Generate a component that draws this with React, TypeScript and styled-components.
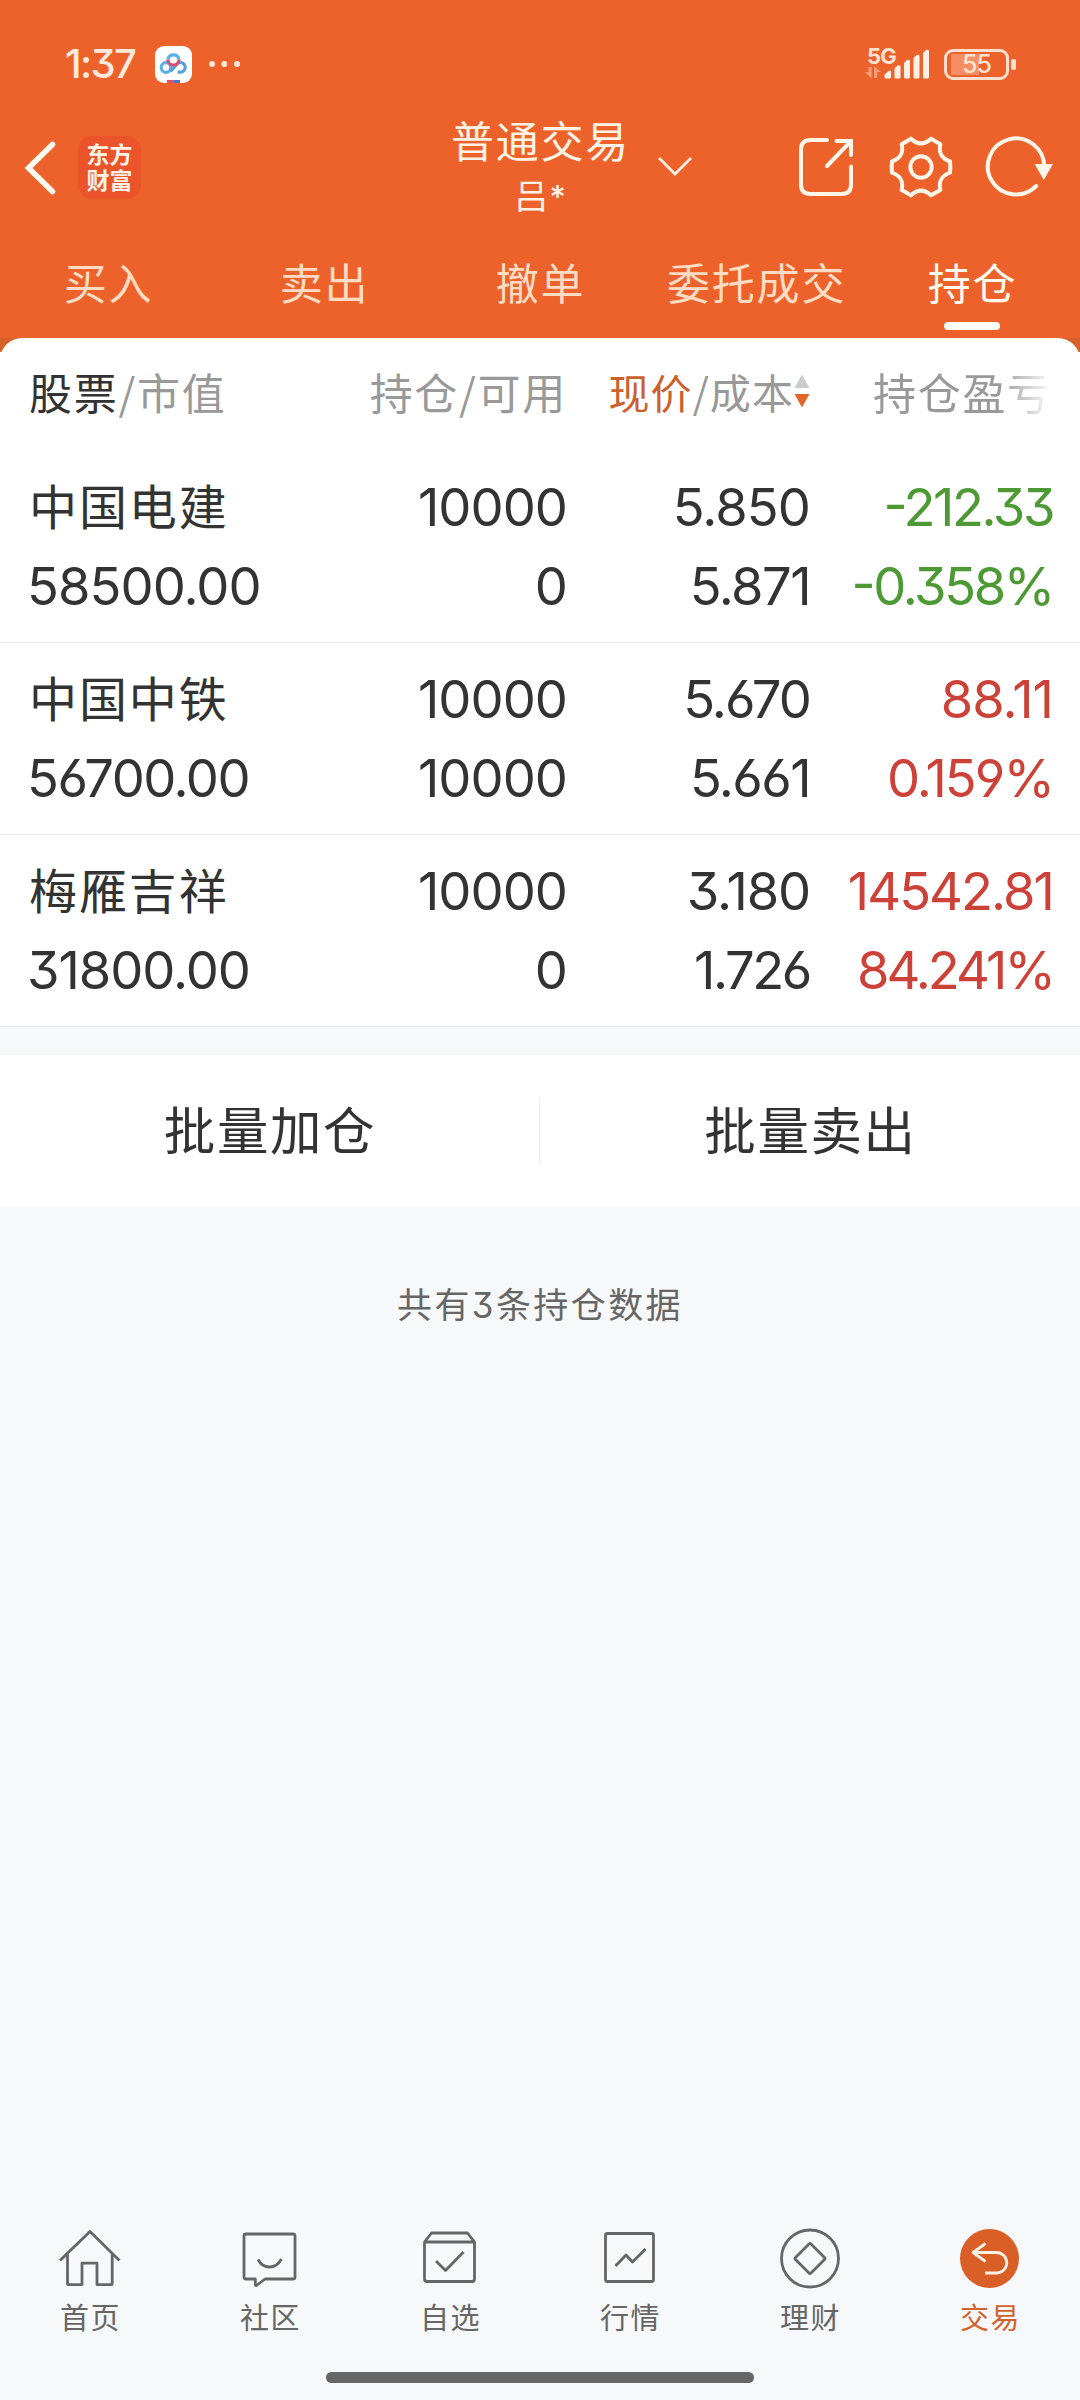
import React from "react";
import styled, { createGlobalStyle } from "styled-components";

const cjk = '"Noto Sans CJK SC", sans-serif';
const figures = 'Inter, "Noto Sans CJK SC", sans-serif';

const Global = createGlobalStyle`
  *, *::before, *::after { box-sizing: border-box; }
  body { margin: 0; background: #f7f8fa; font-family: ${cjk}; color: #333; }
  svg { display: block; flex: none; }
`;

const Screen = styled.div`
  width: 1080px;
  height: 2400px;
  display: flex;
  flex-direction: column;
  overflow: hidden;
  background: #f7f8fa;
`;

/* ---------- header ---------- */

const Header = styled.header`
  height: 338px;
  flex: none;
  background: #ed622b;
  display: flex;
  flex-direction: column;
`;

const StatusBar = styled.div`
  height: 108px;
  padding: 20px 64px 0 65px;
  display: flex;
  align-items: center;
  justify-content: space-between;
`;

const StatusSide = styled.div`
  display: flex;
  align-items: center;
`;

const Clock = styled.span`
  width: 90px;
  font: 500 40px/48px ${figures};
  font-feature-settings: "cv09";
  letter-spacing: -1.6px;
  color: #ffe9dc;
`;

const Network = styled.div`
  width: 34px;
  height: 36px;
  display: flex;
  flex-direction: column;
  margin-right: -15px;
`;

const NetworkLabel = styled.span`
  font: 700 22px/20px ${figures};
  letter-spacing: -0.8px;
  padding-left: 2px;
  color: #ffe3d2;
`;

const Battery = styled.div`
  width: 65px;
  height: 31px;
  margin-left: 14px;
  border: 3px solid #ffdfcd;
  border-radius: 9px;
  padding: 2px 4px;
  display: flex;
  align-items: center;
  justify-content: center;
  background: linear-gradient(#f58e64, #f58e64) 4px 2px / 28px 21px no-repeat;
  font: 500 25px/25px ${figures};
  letter-spacing: -1px;
  color: #ffe3d2;
`;

const BatteryCap = styled.span`
  width: 5px;
  height: 11px;
  margin-left: 2px;
  border-radius: 2px;
  background: #ffdfcd;
`;

const AppIcons = styled.div`
  display: flex;
  align-items: center;
  gap: 16px;
`;

const TitleBar = styled.div`
  height: 120px;
  display: grid;
  grid-template-columns: 422px 235px 139px 1fr;
`;

const NavLeft = styled.div`
  display: flex;
  align-items: center;
  padding: 0 0 1px 22px;
  gap: 21px;
`;

const BrandLogo = styled.div`
  width: 63px;
  height: 63px;
  border-radius: 14px;
  background: #eb542a;
  color: #fff3e8;
  padding: 4px 8px 0 8.5px;
  font: 700 23px/26px ${cjk};
  word-break: break-all;
`;

const TitleText = styled.div`
  display: flex;
  flex-direction: column;
  align-items: center;
  padding: 5px 0 0 2px;
  color: #fff3e6;
`;

const Title = styled.span`
  font: 400 43px/52px ${cjk};
  letter-spacing: 1.8px;
`;

const Account = styled.span`
  font: 400 34px/52px ${cjk};
  letter-spacing: 1px;
  padding-top: 4px;
`;

const Mask = styled.span`
  font: 500 32px/40px ${figures};
`;

const ChevronSlot = styled.div`
  display: flex;
  align-items: center;
  padding-bottom: 4px;
`;

const NavRight = styled.div`
  display: flex;
  align-items: center;
  gap: 31.5px;
  padding-bottom: 2px;
`;

const Tabs = styled.nav`
  height: 110px;
  display: grid;
  grid-template-columns: repeat(5, 1fr);
`;

const Tab = styled.div<{ $active?: boolean }>`
  display: flex;
  flex-direction: column;
  align-items: center;
  padding-top: 21px;
  font: 400 43px/64px ${cjk};
  letter-spacing: 1.8px;
  text-indent: 1.2px;
  white-space: nowrap;
  color: ${(p) => (p.$active ? "#fffaf0" : "#fddcc3")};
  &::after {
    content: "";
    width: 56px;
    height: 8px;
    margin-top: 9px;
    border-radius: 4px;
    background: ${(p) => (p.$active ? "#fffdf8" : "transparent")};
  }
`;

/* ---------- holdings ---------- */

const CornerStrip = styled.div`
  height: 14px;
  flex: none;
  overflow: hidden;
  background: #d65f2b;
  &::before {
    content: "";
    display: block;
    height: 44px;
    border-radius: 22px;
    background: #fff;
  }
`;

const Holdings = styled.section`
  background: #fff;
  flex: none;
`;

const columns = "292px 246px 243px 243px";

const HeadRow = styled.div`
  height: 99px;
  display: grid;
  grid-template-columns: ${columns};
  padding: 7px 27px 0 29px;
  font: 400 43px/64px ${cjk};
  letter-spacing: 1.7px;
  color: #999;
  white-space: nowrap;
`;

const HeadCell = styled.div<{ $end?: boolean; $sorted?: boolean }>`
  display: flex;
  justify-content: ${(p) => (p.$end ? "flex-end" : "flex-start")};
  align-items: center;
  height: 64px;
  font-size: ${(p) => (p.$sorted ? 41 : 43)}px;
  letter-spacing: ${(p) => (p.$sorted ? 1.1 : 1.7)}px;
`;

const FadingCell = styled(HeadCell)`
  padding-left: 63px;
  mask-image: linear-gradient(90deg, #000 188px, transparent 243px);
`;

const Strong = styled.span`
  color: #333;
`;

const Sorted = styled.span`
  color: #cb612d;
`;

const Row = styled.div`
  height: 192px;
  padding: 17px 27px 16px 29px;
  display: grid;
  grid-template-columns: ${columns};
  grid-template-rows: 79px 79px;
  border-bottom: 1px solid #ebebec;
`;

const Name = styled.span`
  font: 400 48px/72px ${cjk};
  letter-spacing: 1.9px;
`;

const FigureText = styled.span<{ $tone?: string; $end?: boolean; $tracking: number }>`
  font: 380 52.5px/79px ${figures};
  font-feature-settings: "cv03", "cv04", "cv09", "case";
  letter-spacing: ${(p) => p.$tracking}px;
  text-align: ${(p) => (p.$end ? "right" : "left")};
  margin-left: ${(p) => (p.$end ? 0 : -2)}px;
  color: ${(p) => p.$tone ?? "#333"};
  white-space: nowrap;
`;

const Actions = styled.div`
  height: 152px;
  margin-top: 28px;
  flex: none;
  display: grid;
  grid-template-columns: 539px 1px 1fr;
  align-items: center;
  background: #fff;
`;

const Action = styled.button`
  border: 0;
  background: none;
  padding: 0 0 6px 1px;
  font: 400 51.5px/80px ${cjk};
  letter-spacing: 1.6px;
  color: #333;
`;

const Divider = styled.span`
  height: 68px;
  background: #ececee;
`;

const Summary = styled.p`
  margin: 72px 0 0;
  font: 400 35px/52px ${figures};
  font-feature-settings: "cv09";
  letter-spacing: 2.4px;
  text-align: center;
  color: #666;
`;

/* ---------- bottom navigation ---------- */

const BottomNav = styled.nav`
  margin-top: auto;
  height: 144px;
  flex: none;
  display: grid;
  grid-template-columns: repeat(6, 1fr);
`;

const NavItem = styled.div<{ $active?: boolean }>`
  display: flex;
  flex-direction: column;
  align-items: center;
  font: 400 29px/40px ${cjk};
  letter-spacing: 1.6px;
  color: ${(p) => (p.$active ? "#d1622f" : "#666")};
`;

const NavLabel = styled.span`
  margin: 6px 0 0 1px;
`;

const HomeBar = styled.div`
  width: 428px;
  height: 11px;
  margin: 0 auto 17px;
  flex: none;
  border-radius: 6px;
  background: #666;
`;

/* ---------- drawings ---------- */

const CloudApp = () => (
  <svg width="37" height="37" viewBox="0 0 37 37" fill="none">
    <rect width="37" height="37" rx="9" fill="#fff" />
    <circle cx="11" cy="21.500" r="4.800" stroke="#5bb0e6" strokeWidth="3.200" />
    <path d="M15.500 25.500l6-7a4.800 4.800 0 1 1 1.500 7" stroke="#559fe0" strokeWidth="3.200" />
    <path d="M13 13.500a5.600 5.600 0 0 1 11 0" stroke="#5cb2e6" strokeWidth="3.200" />
    <path d="M12.900 13.500a5.600 5.600 0 0 0 11.200 0" stroke="#d9506c" strokeWidth="3.200" />
    <path d="M12 34h7v3h-7z" fill="#dc5570" />
    <path d="M19 34h6v3h-6z" fill="#4a78c8" />
  </svg>
);

const Dots = () => (
  <svg width="34" height="8" viewBox="0 0 34 8" fill="#ffe6d8">
    <circle cx="4" cy="4" r="3" />
    <circle cx="16.300" cy="4" r="3" />
    <circle cx="29" cy="4" r="3" />
  </svg>
);

const DataArrows = () => (
  <svg width="16" height="13" viewBox="0 0 16 13" fill="#f79c78">
    <path d="M3.600 1h3v11.500L0 6h3.600zM9 0l7 6h-3.800v6H9z" />
  </svg>
);

const Signal = () => (
  <svg width="46" height="30" viewBox="0 0 46 30" fill="#fff0e6">
    <path d="M.5 25.500 4 22.500q3-2 3 0V28q0 1.500-1.500 1.500h-3.500q-1.500 0-1.500-1.500zM10.500 19.500l3-3q3-1 3 1V28q0 1.500-1.500 1.500h-3q-1.500 0-1.500-1.500zM20 14l3-3q3-1 3 1v16q0 1.500-1.500 1.500h-3Q20 29.500 20 28zM29.500 9l3-3q3-1 3 1v21q0 1.500-1.500 1.500h-3q-1.500 0-1.500-1.500zM39 4l3-3q3-1 3 1v26q0 1.500-1.500 1.500h-3Q39 29.500 39 28z" />
  </svg>
);

const Back = () => (
  <svg width="35" height="56" viewBox="0 0 35 56" fill="none" stroke="#fff8ee" strokeWidth="5.600" strokeLinecap="round">
    <path d="M30.500 4.500 6.500 28l24 23.500" />
  </svg>
);

const Share = () => (
  <svg width="60" height="62" viewBox="796 136 60 62" fill="none" stroke="#fff6ea" strokeWidth="4" strokeLinecap="round">
    <path d="M827 140H810.500Q801 140 801 149.500V184.500Q801 194 810.500 194H841.500Q851 194 851 184.500V166.500M827 166 850.500 141.500M836.500 141H851V155" />
  </svg>
);

const Gear = () => (
  <svg width="66" height="62" viewBox="383 348 198 186" fill="none" stroke="#fff6ea" strokeWidth="12" strokeLinejoin="round">
    <path d="M452 356Q482 384 512 356L540 373C534 400 544 415 569 424Q571 441 569 458C544 467 534 482 540 510L512 526Q482 498 452 526L424 510C430 482 420 467 395 458Q393 441 395 424C420 415 430 400 424 373Z" />
    <circle cx="482" cy="441" r="32" />
  </svg>
);

const Refresh = () => (
  <svg width="68" height="62" viewBox="984 136 68 62" fill="none" stroke="#fff6ea" strokeWidth="4" strokeLinecap="round">
    <path d="M1043.200 167A28.200 28 0 1 0 1035.200 186" />
    <path d="M1033.500 164h18.500l-9.200 16z" fill="#fff6ea" stroke="none" />
  </svg>
);

const Chevron = () => (
  <svg width="36" height="22" viewBox="0 0 36 22" fill="none" stroke="#fff0e2" strokeWidth="2.800">
    <path d="M2 3l16 16L34 3" />
  </svg>
);

const SortArrows = () => (
  <svg width="16" height="36" viewBox="0 0 16 36">
    <path d="M8 1.500l7.500 13.500H.5z" fill="#ccc" />
    <path d="M8 34.500L.5 21h15z" fill="#e3652c" />
  </svg>
);

const icons: Record<string, React.ReactNode> = {
  home: <path d="M60 2260.500 90 2231.500l29.500 29M67.500 2254.500v29.500q0 .7.700.7H82v-21.500h15v21.500h14.500q.7 0 .7-.7v-29.500" />,
  chat: (
    <g transform="translate(-180)">
      <path d="M246 2234h47q2 0 2 2v41q0 2-2 2h-28l-8.500 6.500q-1.200.5-1.200-1V2279H246q-2 0-2-2v-41q0-2 2-2z" />
      <path d="M258 2259.500q4 7.500 11.500 7.500t12-8" />
    </g>
  ),
  picks: (
    <g transform="translate(-360)">
      <path d="M424.500 2242l7-9h36l7 9v37q0 2.500-2.500 2.500h-45q-2.500 0-2.500-2.500zh50" />
      <path d="M436 2261l9.500 9.500 18-18.500" />
    </g>
  ),
  market: (
    <g transform="translate(-540)">
      <rect x="605.500" y="2233.500" width="48" height="48" rx="2" />
      <path d="M615.500 2266l10.500-11 6.500 7 13-13" />
    </g>
  ),
  wealth: (
    <g transform="translate(-720)">
      <circle cx="810" cy="2258.500" r="28.500" />
      <path d="M809 2244q1-1 2 0l13.500 13.500q1 1 0 2l-13.500 13.500q-1 1-2 0l-13.500-13.500q-1-1 0-2z" />
    </g>
  ),
  trade: (
    <g transform="translate(-900)">
      <circle cx="989.500" cy="2258.500" r="29.500" fill="#d95f27" stroke="none" />
      <path d="M985.500 2243.500 973 2252.500l12.500 9M973 2252.500h23.500a10 10 0 0 1 0 20.500H985" stroke="#fff0e4" />
    </g>
  ),
};

const TabIcon = ({ name }: { name: string }) => (
  <svg width="64" height="62" viewBox="58 2228 64 62" fill="none" stroke="#666" strokeWidth="2.800" strokeLinejoin="round">
    {icons[name]}
  </svg>
);

/* ---------- figures ---------- */

// Width to take off each wide glyph, spread over the whole number as tracking.
const excess: Record<string, number> = { "2": 2.7, "3": 1, "4": 2.7, "6": 1.6, "7": 3, "%": 6, "-": 3 };

const trackingFor = (text: string) =>
  -0.95 - [...text].reduce((sum, c) => sum + (excess[c] ?? 0), 0) / text.length;

const Figure = ({ children, end, tone }: { children: string; end?: boolean; tone?: string }) => (
  <FigureText $end={end} $tone={tone} $tracking={trackingFor(children)}>
    {children}
  </FigureText>
);

/* ---------- data ---------- */

const green = "#4d9a35";
const red = "#cd4238";

const positions = [
  { name: "中国电建", value: "58500.00", held: "10000", free: "0", price: "5.850", cost: "5.871", profit: "-212.33", rate: "-0.358%", tone: green },
  { name: "中国中铁", value: "56700.00", held: "10000", free: "10000", price: "5.670", cost: "5.661", profit: "88.11", rate: "0.159%", tone: red },
  { name: "梅雁吉祥", value: "31800.00", held: "10000", free: "0", price: "3.180", cost: "1.726", profit: "14542.81", rate: "84.241%", tone: red },
];

const tabs = ["买入", "卖出", "撤单", "委托成交", "持仓"];

const navItems = [
  ["home", "首页"],
  ["chat", "社区"],
  ["picks", "自选"],
  ["market", "行情"],
  ["wealth", "理财"],
  ["trade", "交易"],
];

export default function App() {
  return (
    <Screen>
      <Global />
      <Header>
        <StatusBar>
          <StatusSide>
            <Clock>1:37</Clock>
            <AppIcons>
              <CloudApp />
              <Dots />
            </AppIcons>
          </StatusSide>
          <StatusSide>
            <Network>
              <NetworkLabel>5G</NetworkLabel>
              <DataArrows />
            </Network>
            <Signal />
            <Battery>55</Battery>
            <BatteryCap />
          </StatusSide>
        </StatusBar>
        <TitleBar>
          <NavLeft>
            <Back />
            <BrandLogo>东方财富</BrandLogo>
          </NavLeft>
          <TitleText>
            <Title>普通交易</Title>
            <Account>
              吕<Mask>*</Mask>
            </Account>
          </TitleText>
          <ChevronSlot>
            <Chevron />
          </ChevronSlot>
          <NavRight>
            <Share />
            <Gear />
            <Refresh />
          </NavRight>
        </TitleBar>
        <Tabs>
          {tabs.map((t) => (
            <Tab key={t} $active={t === "持仓"}>
              {t}
            </Tab>
          ))}
        </Tabs>
      </Header>
      <CornerStrip />
      <Holdings>
        <HeadRow>
          <HeadCell>
            <Strong>股票</Strong>/市值
          </HeadCell>
          <HeadCell $end>持仓/可用</HeadCell>
          <HeadCell $end $sorted>
            <Sorted>现价</Sorted>/成本
            <SortArrows />
          </HeadCell>
          <FadingCell>持仓盈亏</FadingCell>
        </HeadRow>
        {positions.map((p) => (
          <Row key={p.name}>
            <Name>{p.name}</Name>
            <Figure end>{p.held}</Figure>
            <Figure end>{p.price}</Figure>
            <Figure end tone={p.tone}>{p.profit}</Figure>
            <Figure>{p.value}</Figure>
            <Figure end>{p.free}</Figure>
            <Figure end>{p.cost}</Figure>
            <Figure end tone={p.tone}>{p.rate}</Figure>
          </Row>
        ))}
      </Holdings>
      <Actions>
        <Action>批量加仓</Action>
        <Divider />
        <Action>批量卖出</Action>
      </Actions>
      <Summary>共有3条持仓数据</Summary>
      <BottomNav>
        {navItems.map(([icon, label]) => (
          <NavItem key={icon} $active={icon === "trade"}>
            <TabIcon name={icon} />
            <NavLabel>{label}</NavLabel>
          </NavItem>
        ))}
      </BottomNav>
      <HomeBar />
    </Screen>
  );
}
